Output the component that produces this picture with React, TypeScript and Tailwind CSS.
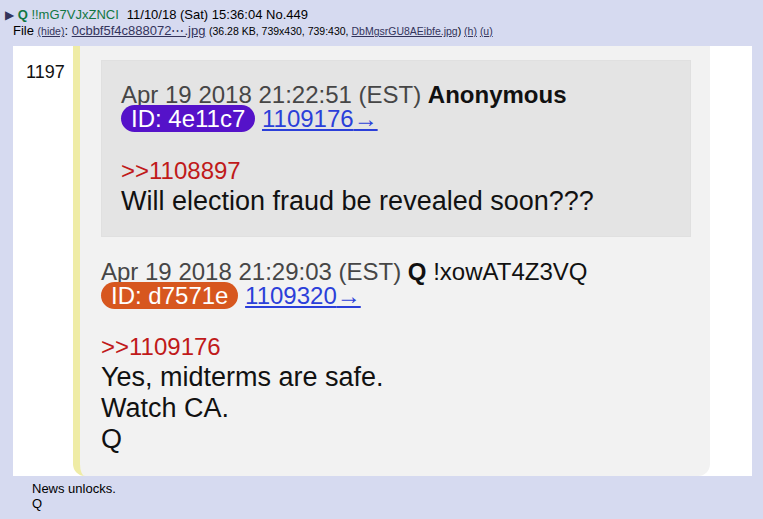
const Pill = ({ id, color }: { id: string; color: string }) => (
  <span className={`rounded-full px-[10px] text-white ${color}`}>ID: {id}</span>
);

const Header = ({ time, name, trip, id, color, link }: {
  time: string;
  name: string;
  trip?: string;
  id: string;
  color: string;
  link: string;
}) => (
  <div className="text-[24px] leading-[24px] text-[#464646]">
    <div>
      {time} (EST) <b className="text-[#111]">{name}</b>
      {trip && <span className="text-[#111]"> {trip}</span>}
    </div>
    <div>
      <Pill id={id} color={color} />{" "}
      <a className="text-[#2b3fd9] underline">{link}→</a>
    </div>
  </div>
);

export default function App() {
  return (
    <div className="min-h-[519px] w-full bg-[#d6daf0] font-['Liberation_Sans',Arial,sans-serif] text-black">
      <div className="pl-[5px] pt-[7px] text-[13px] leading-[16px]">
        <span className="text-[12px] text-[#34345c]">▶</span>{" "}
        <b className="text-[#117743]">Q</b>{" "}
        <span className="text-[#117743]">!!mG7VJxZNCI</span>
        <span className="ml-[8px]">11/10/18 (Sat) 15:36:04 No.449</span>
      </div>
      <div className="pl-[13px] text-[13px] leading-[16px]">
        File <span className="text-[10.5px] underline text-[#34345c]">(hide)</span>:{" "}
        <a className="text-[#34345c] underline">0cbbf5f4c888072⋯.jpg</a>{" "}
        <span className="text-[10.5px]">
          (36.28 KB, 739x430, 739:430,{" "}
          <a className="text-[#34345c] underline">DbMgsrGU8AEibfe.jpg</a>){" "}
          <a className="text-[#34345c] underline">(h)</a>{" "}
          <a className="text-[#34345c] underline">(u)</a>
        </span>
      </div>

      <div className="ml-[13px] mt-[7px] flex h-[430px] w-[739px] overflow-hidden bg-white">
        <div className="w-[60px] pl-[13px] pt-[16px] text-[18px] leading-[20px] text-[#111]">1197</div>
        <div className="w-[637px] rounded-b-[12px] border-l-[7px] border-[#efeca6] bg-[#f2f2f2] pl-[21px] pr-[19px] pt-[14px]">
          <div className="border border-[#e0e0e0] bg-[#e4e4e4] pb-[19px] pl-[19px] pt-[22px]">
            <Header
              time="Apr 19 2018 21:22:51"
              name="Anonymous"
              id="4e11c7"
              color="bg-[#5512c9]"
              link="1109176"
            />
            <div className="mt-[24px] leading-[31px] text-[#111]">
              <div className="text-[24px] text-[#c01a1a]">&gt;&gt;1108897</div>
              <div className="text-[27px]">Will election fraud be revealed soon???</div>
            </div>
          </div>
          <div className="mt-[23px]">
            <Header
              time="Apr 19 2018 21:29:03"
              name="Q"
              trip="!xowAT4Z3VQ"
              id="d7571e"
              color="bg-[#d7571f]"
              link="1109320"
            />
            <div className="mt-[23px] text-[27px] leading-[31px] text-[#111]">
              <div className="text-[24px] text-[#c01a1a]">&gt;&gt;1109176</div>
              <div>Yes, midterms are safe.</div>
              <div>Watch CA.</div>
              <div>Q</div>
            </div>
          </div>
        </div>
      </div>

      <div className="ml-[32px] mt-[5px] text-[13px] leading-[15px]">
        <div>News unlocks.</div>
        <div>Q</div>
      </div>
    </div>
  );
}
